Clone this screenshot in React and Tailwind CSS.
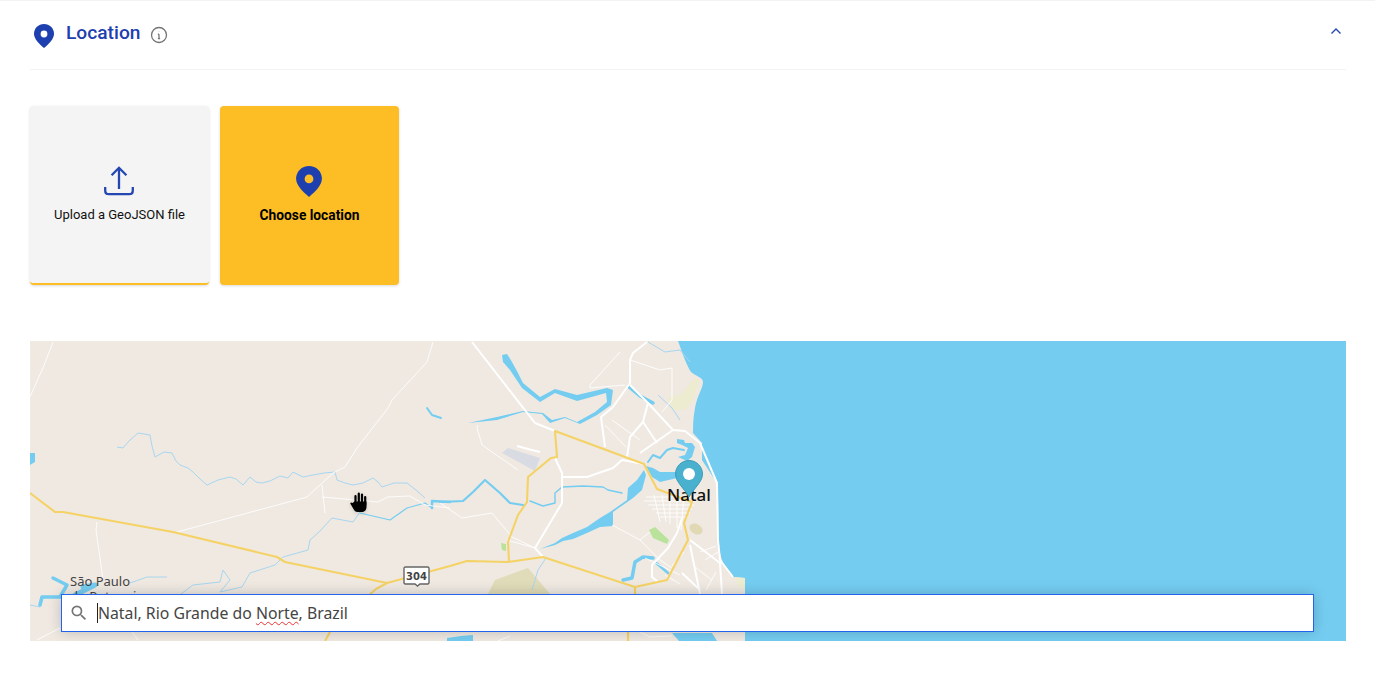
import React from 'react';

function Pin({ className, dot }) {
  return (
    <svg viewBox="0 0 20 24" className={className}>
      <path d="M10 0C4.400 0 0 4.300 0 9.700 0 15 5 19.600 10 24c5-4.400 10-9 10-14.300C20 4.300 15.600 0 10 0z" fill="#1e40af" />
      <circle cx="10" cy="10" r="3.400" fill={dot} />
    </svg>
  );
}

function UploadIcon() {
  return (
    <svg viewBox="0 0 30 30" className="-ml-px h-[30px] w-[30px]" fill="none" stroke="#2446b0" strokeWidth="2.300">
      <path d="M15 1.500V23M7.600 9.200 15 1.800l7.400 7.400" />
      <path d="M1.200 21v3.500c0 2.200 1.500 3.700 3.600 3.700h20.400c2.100 0 3.600-1.500 3.600-3.700V21" />
    </svg>
  );
}

const yellow = [
  'M30 493 55 512H63L173 532 277 557 285 562 387 583 450 566 467 561 508 562 543 557 635 587 667 580 688 540 684 523 692 502 657 489 644 464 555 431 557 457 551 458 528 477 527 502 518 515 508 542 509 562',
  'M635 587V596M387 583 376 589 368 596M330 632 325 641M628 632V641',
];

const whiteMain = [
  'M472 342 535 423 555 431M555 458 562 473V503L535 548 543 557M562 477H587L613 468 622 460 644 464',
  'M647 342 633 353 630 360V383L613 407 601 417 605 447',
  'M630 385 648 403 673 430 685 431 700 443 717 483 718 540 720 560 733 577',
  'M648 403 643 422 630 437 627 457M643 422 657 443M640 453 673 430',
  'M682 518 677 533 668 548 652 565V577L658 582M690 540 720 563 722 594M690 545 700 594M682 573 700 590',
  'M517 446 528 449 540 452',
];

const whiteThin = [
  'M433 342 427 362 392 400 388 408 357 448 345 467 333 473 307 497 177 532',
  'M53 342 45 363 30 397M97 522 96 530 103 580M322 485 325 513M322 497 378 502 388 497 410 496 425 505 450 508',
  'M440 503 462 518 492 513 512 537 535 548M507 540 535 548',
  'M478 425 477 428 482 445 518 470M620 352 590 385 590 388 625 385',
  'M612 420 640 440M605 425 626 447M630 360 660 370 672 368 672 400 662 412',
  'M612 525 640 540 650 532M640 540 660 560 672 568M645 558 680 575',
  'M60 628 37 640M132 632 138 640M640 632 650 637 672 636M510 636 498 641',
  'M646 497H698M644 501H696M648 505H694M652 509H692M656 513H690M660 517H688',
  'M654 495 660 522M662 495 666 522M670 495V524M677 495V528M684 495 681 530',
  'M700 552 716 546M705 560 718 552M695 567 712 580M706 590 716 572M672 566 684 552M665 575 680 584',
];

const blueThin = [
  'M117 447 123 448 129 441 138 433 150 435 152 446 155 457 164 452 172 453 176 461 180 465 188 468 193 472 199 478 207 485 218 480 230 477 236 479 243 485 250 477 256 482 262 483 270 481 280 476 288 478 293 472 303 477 313 475 324 473 335 472 337 480 345 483 353 485 363 483 373 478 378 482 382 487 394 483 407 483 416 490 425 498',
  'M360 512 353 522 332 518 320 531 310 540 308 550 283 557 275 565 250 573 242 587 220 592 230 580 223 570 220 582 193 585 177 597',
  'M167 577 147 577 130 583M30 605 40 607M648 342 665 352 680 350 690 362',
  'M658 395 672 408 680 420M532 590 538 570 546 558',
];

const blueThick = [
  ['M427 408 432 415 441 418', 2],
  ['M629 387 640 396 653 403', 3.500],
  ['M648 462 653 455 660 458 667 450 673 448 684 450', 2],
  ['M440 502 463 501 473 492 485 480 500 493 510 503 523 505', 2.200],
  ['M530 501 543 506 555 503 555 493 562 487 583 486 603 487 608 490 622 493', 1.400],
  ['M623 580 632 578 635 562 643 557 653 558', 3.500],
  ['M655 562 668 573', 2.500],
  ['M407 508 425 503 432 508M360 513 390 520 407 508', 1.200],
  ['M432 508V501L450 502', 2.500],
  ['M53 578 67 585 60 597 42 597 40 605', 3.500],
  ['M83 587 95 585 75 595', 5],
];

const waterShapes =
  'M502 355 507 354 512 362 518 373 523 383 540 397 555 389 577 395 607 388 613 390 611 405 597 415 580 424 565 418 550 423 542 414 523 412 497 420 468 423 497 417 523 411 543 413 552 420 565 417 577 422 595 412 607 402 606 393 577 401 555 393 540 402 522 388 510 370 503 362z' +
  'M644 470 646 475 642 490 633 498 613 512 613 526 600 527 587 533 573 539 563 541 555 545 540 549 555 543 562 538 573 533 587 527 600 518 610 512 627 500 628 488 637 480z' +
  'M646 466 653 468 660 472 677 472 677 478 660 482 652 477z' +
  'M677 439 684 440 685 443 692 443 695 447 692 457 687 461 678 457 685 455 688 448 682 445 677 443z' +
  'M30 453h5v9l-5 3zM672 633h40l5 8h-38zM447 638l14-2 12-1v6h-26z';

function MapArt() {
  return (
    <svg viewBox="30 341 1316 300" className="block h-[300px] w-full bg-[#efe9e2]">
      <path d="M678 341C683 355 687 366 691 372 695 376 703 377 703 382 703 388 697 396 695 408 693 418 693 426 693 433L702 443 702 460 717 483C719 500 718 525 718 540 719 552 722 567 733 577L745 578V641H1346V341z" fill="#74cdf1" />
      <path d={waterShapes} fill="#74cdf1" />

      <path d="M667 397 680 395 695 378 700 380 693 400 685 410 672 410z" fill="#eeecd0" />
      <path d="M735 577 745 578V590L738 586z" fill="#eeecd0" />
      <ellipse cx="696" cy="529" rx="7" ry="5" transform="rotate(30 696 529)" fill="#e0d9b4" />
      <path d="M488 594 495 580 528 568 550 594z" fill="#e0dbb8" />
      <path d="M502 453 508 448 540 458 535 471z" fill="#d8dbe2" />
      <path d="M649 530 655 527 669 540 667 544 653 538zM501 543 506 544 506 551 502 550z" fill="#b9e29a" />

      {blueThin.map((d) => (
        <path key={d} d={d} fill="none" stroke="#a8d6f0" strokeWidth="1" />
      ))}
      {blueThick.map(([d, w]) => (
        <path key={d} d={d} fill="none" stroke="#74cdf1" strokeWidth={w} strokeLinejoin="round" strokeLinecap="round" />
      ))}
      {whiteThin.map((d) => (
        <path key={d} d={d} fill="none" stroke="#fff" strokeOpacity="0.85" strokeWidth="1" />
      ))}
      {whiteMain.map((d) => (
        <path key={d} d={d} fill="none" stroke="#fff" strokeWidth="2" strokeLinejoin="round" />
      ))}
      {yellow.map((d) => (
        <path key={d} d={d} fill="none" stroke="#f5d265" strokeWidth="2.100" strokeLinejoin="round" />
      ))}

      <path d="M405 567h23l1 1v15l-1 1h-8l-2.500 2-2.500-2h-10l-1-1v-15z" fill="#fff" stroke="#666" strokeWidth="1.400" />
      <text x="416.500" y="580" textAnchor="middle" className="font-['DejaVu_Sans',sans-serif] text-[10px] font-bold" fill="#444">304</text>

      <text className="font-['Noto_Sans',sans-serif] text-[13px]" fill="#444">
        <tspan x="70" y="586">São Paulo</tspan>
        <tspan x="70" y="601">do Potengi</tspan>
      </text>
      <text x="667" y="501" className="font-['Noto_Sans',sans-serif] text-[17px] font-medium" fill="#111">Natal</text>

      <path d="M689 460.500c-7.500 0-13.500 6-13.500 13.500 0 8 8.500 14 13.500 23 5-9 13.500-15 13.500-23 0-7.500-6-13.500-13.500-13.500z" fill="#42aecd" stroke="#3b9dbb" strokeWidth="1" fillOpacity="0.96" />
      <circle cx="689" cy="474" r="6" fill="#fff" />

      <g className="drop-shadow-sm">
        <path d="M355.500 504V496M358.800 504V493.500M362 504V494.500M365.200 505V497" fill="none" stroke="#000" strokeWidth="2.200" strokeLinecap="round" />
        <path d="M354.500 501.500h12v5.500c0 3-2 5-5 5h-4c-2 0-3-1-4-3l-3-5c-.7-1.200.6-2.300 2-1z" fill="#000" />
      </g>
    </svg>
  );
}

export default function App() {
  return (
    <div className="min-h-[688px] border-t border-[#f3f3f3] bg-white pl-[30px] pr-[29px] font-['Roboto',sans-serif]">
      <div className="flex h-[69px] items-start border-b border-[#f3f3f3]">
        <Pin className="ml-1 mt-[23px] h-6 w-5" dot="#fff" />
        <span className="ml-3 mt-[19px] text-[19.200px] font-medium leading-[26px] text-[#1e40af]">Location</span>
        <svg viewBox="0 0 24 24" className="ml-2.5 mt-[25px] h-[18px] w-[18px]" fill="none" stroke="#757575" strokeWidth="1.700">
          <circle cx="12" cy="12" r="10" />
          <path d="M12 16.500v-5.500M10.500 11H12M10.500 16.700h3M12 7.200v.6" />
        </svg>
        <svg viewBox="0 0 10 6" className="ml-auto mr-[5px] mt-[27px] h-1.5 w-2.5" fill="none" stroke="#2446b0" strokeWidth="1.400">
          <path d="M.5 5.500 5 1l4.500 4.500" />
        </svg>
      </div>

      <div className="mt-9 flex gap-[11px]">
        <button className="flex h-[179px] w-[179px] flex-col items-center rounded-sm border-b-2 border-[#fcbe24] bg-[#f4f4f4] pt-[60px] shadow-[0_1px_3px_rgba(0,0,0,0.15)]">
          <UploadIcon />
          <span className="mt-[10px] text-[13px] leading-[18px] text-[#111]">Upload a GeoJSON file</span>
        </button>
        <button className="flex h-[179px] w-[179px] flex-col items-center rounded-sm bg-[#fcbe24] pt-[60px] shadow-[0_1px_3px_rgba(0,0,0,0.15)]">
          <Pin className="-ml-px h-[31px] w-[26px]" dot="#fcbe24" />
          <span className="mt-[9px] text-[13.750px] font-bold leading-[18px] text-black">Choose location</span>
        </button>
      </div>

      <div className="relative mt-14 h-[300px] overflow-hidden">
        <MapArt />
        <div className="absolute bottom-[9px] left-[31px] right-8 flex h-[38px] items-center border border-[#2563eb] bg-white pl-[7px] shadow-[0_0_14px_rgba(0,0,0,0.2)]">
          <svg viewBox="0 0 24 24" className="h-5 w-5" fill="#757575">
            <path d="M15.500 14h-.79l-.28-.27A6.470 6.470 0 0 0 16 9.500 6.500 6.500 0 1 0 9.500 16c1.610 0 3.090-.59 4.230-1.570l.27.28v.79l5 4.990L20.490 19l-4.990-5zm-6 0C7.010 14 5 11.990 5 9.500S7.010 5 9.500 5 14 7.010 14 9.500 11.990 14 9.500 14z" />
          </svg>
          <span className="ml-2 border-l border-[#222] font-['Noto_Sans',sans-serif] text-[15.800px] leading-[20px] text-[#444]">
            Natal, Rio Grande do{' '}
            <span className="underline decoration-[#e33] decoration-wavy decoration-1 underline-offset-2">Norte</span>
            , Brazil
          </span>
        </div>
      </div>
    </div>
  );
}
